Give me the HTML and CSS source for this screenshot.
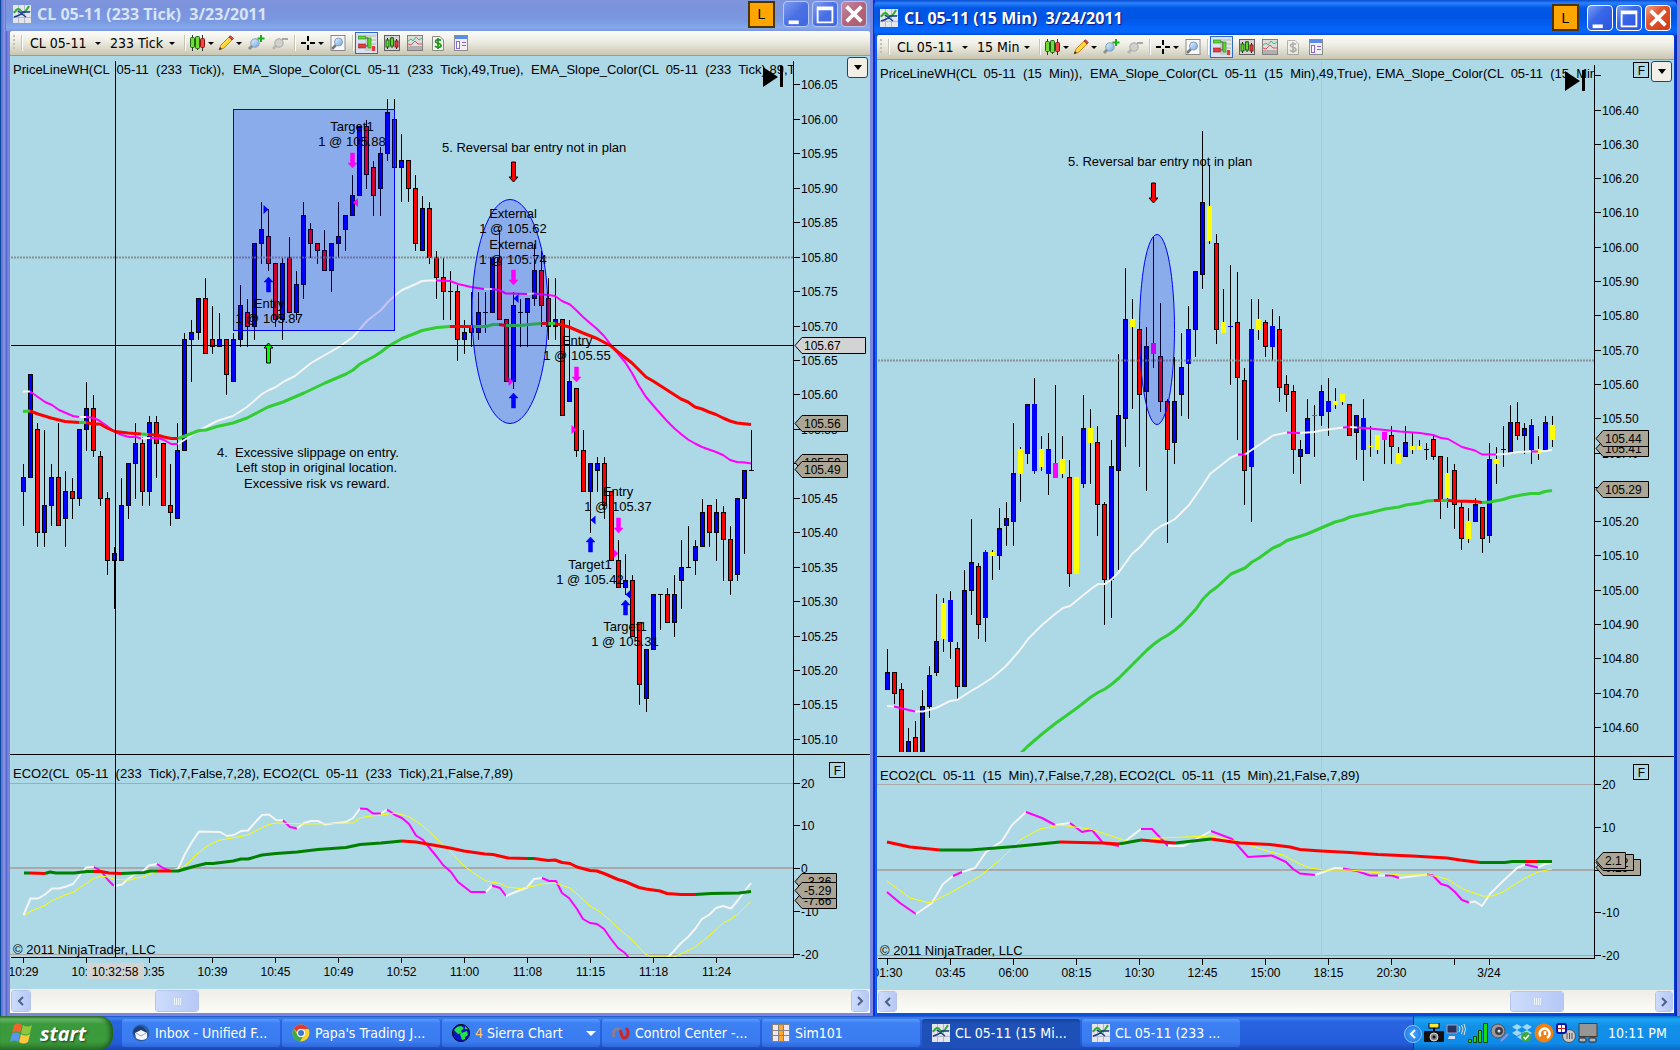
FILE: index.html
```
<!DOCTYPE html>
<html lang="en">
<head>
<meta charset="utf-8">
<title>CL 05-11 charts</title>
<link rel="stylesheet" href="styles.css">
</head>
<body>
<svg class="defs" width="0" height="0" aria-hidden="true">
  <defs>
    <linearGradient id="glass" x1="0" y1="0" x2="1" y2="1"><stop offset="0" stop-color="#e8f4ff"/><stop offset="1" stop-color="#6fa8dc"/></linearGradient>
    <symbol id="i-app" viewBox="0 0 18 18"><rect width="18" height="18" fill="#e4e6ee"/><path d="M5.500 0V18M11.500 0V18M0 6.500H18M0 12.500H18" stroke="#b4b8c8" stroke-width="1"/><path d="M1 8C4 3 6 3 8 6S12 8 16 1" fill="none" stroke="#2fae2f" stroke-width="2"/><path d="M1 12C5 11 8 10 10 7L17 7M5 6L13 12" fill="none" stroke="#1c3c8c" stroke-width="1.500"/></symbol>
    <symbol id="i-bars" viewBox="0 0 16 16"><path d="M2.500 0V16M7.500 1V15M12.500 0V16" stroke="#333"/><rect x=".5" y="2.500" width="4" height="10" rx="1" fill="#6edc32" stroke="#1e6414"/><rect x="5.500" y="1.500" width="4" height="12" rx="1" fill="#6edc32" stroke="#1e6414"/><rect x="10.500" y="3.500" width="4" height="9" rx="1" fill="#f04646" stroke="#8c1414"/></symbol>
    <symbol id="i-pencil" viewBox="0 0 16 16"><path d="M1 15L3 10L11 2L14 5L6 13Z" fill="#ffd93a" stroke="#c8862a"/><path d="M11 2L12.500 .8L15.200 3.500L14 5Z" fill="#e05050" stroke="#a03030"/><path d="M1 15L2 12L4 14Z" fill="#333"/></symbol>
    <symbol id="i-zoomin" viewBox="0 0 18 16"><path d="M2 14L6 10" stroke="#8f8f8f" stroke-width="3"/><circle cx="8" cy="8" r="4.200" fill="url(#glass)" stroke="#7d9cbc"/><path d="M14 0V7M10.500 3.500H17.500" stroke="#18b018" stroke-width="2"/></symbol>
    <symbol id="i-zoomout" viewBox="0 0 18 16"><path d="M2 14L6 10" stroke="#b8b8b0" stroke-width="3"/><circle cx="8" cy="8" r="4.200" fill="#d0d0cc" stroke="#a8a8a4"/><path d="M11 4H17" stroke="#a8a8a0" stroke-width="2"/></symbol>
    <symbol id="i-cross" viewBox="0 0 16 16"><path d="M8 1V6M8 10V15M1 8H6M10 8H15" stroke="#000" stroke-width="2"/></symbol>
    <symbol id="i-find" viewBox="0 0 16 16"><rect x="1" y=".5" width="14" height="15" fill="#f8f8f8" stroke="#8a8a8a"/><path d="M2 14L6 10" stroke="#777" stroke-width="2.500"/><circle cx="8.500" cy="7" r="4" fill="url(#glass)" stroke="#7d9cbc"/></symbol>
    <symbol id="i-trader" viewBox="0 0 18 16"><rect x="7" width="11" height="16" fill="#c8d0cc"/><path d="M9 3H18M9 7H18M9 11H18" stroke="#fff"/><rect x=".5" y="1" width="7" height="3" fill="#5adc28" stroke="#28821e" stroke-width=".6"/><rect x=".5" y="9" width="7" height="4" fill="#e63c3c" stroke="#8c1e1e" stroke-width=".6"/><path d="M8 3H10V11H8" fill="none" stroke="#444"/><rect x="10" y="3" width="3" height="10" fill="#5adc28" stroke="#28821e" stroke-width=".6"/><rect x="14" y="11" width="3" height="5" fill="#e63c3c"/></symbol>
    <symbol id="i-boxbars" viewBox="0 0 16 16"><rect x=".5" y=".5" width="15" height="15" fill="#d4d4d4" stroke="#606060"/><path d="M3.500 3V14M8 2V13M12.500 4V14" stroke="#222"/><rect x="2" y="5" width="3" height="7" fill="#5adc28" stroke="#1e6414"/><rect x="6.500" y="3" width="3" height="8" fill="#5adc28" stroke="#1e6414"/><rect x="11" y="6" width="3" height="6" fill="#e63c3c" stroke="#8c1e1e"/></symbol>
    <symbol id="i-lines" viewBox="0 0 16 16"><rect x=".5" y=".5" width="15" height="15" fill="#dcdcdc" stroke="#808080"/><path d="M1 11H15V15H1Z" fill="#b0b0b0"/><path d="M1 6L4 4L6 6L9 2L12 5L15 3" fill="none" stroke="#50b478"/><path d="M1 9L4 10L8 6L11 9L15 9" fill="none" stroke="#e05050"/></symbol>
    <symbol id="i-money" viewBox="0 0 16 16"><path d="M2.500 1.500H10L13.500 5V15.500H2.500Z" fill="#f4f4f0" stroke="#8c8c84"/><path d="M11 5.500C9 4 5.500 4.500 5.500 6.500S11 8 11 10.500S6 12.500 5 11M8 3V14" fill="none" stroke="currentColor" stroke-width="1.700"/></symbol>
    <symbol id="i-form" viewBox="0 0 16 16"><rect x="1.500" y=".5" width="13" height="15" fill="#f0f0f4" stroke="#8c8c90"/><rect x="2" y="1" width="12" height="3" fill="#5a8ce6"/><rect x="3.500" y="6.500" width="3" height="7" fill="#fff" stroke="#8c64dc"/><path d="M9 7.500H13M9 10.500H13" stroke="#8c64dc"/></symbol>
    <symbol id="i-left" viewBox="0 0 8 10"><path d="M6 1L2 5L6 9" fill="none" stroke="currentColor" stroke-width="2"/></symbol>
    <symbol id="i-right" viewBox="0 0 8 10"><path d="M2 1L6 5L2 9" fill="none" stroke="currentColor" stroke-width="2"/></symbol>
  </defs>
</svg>

<main class="desktop">
  <section class="window window--back" aria-label="CL 05-11 (233 Tick)">
    <header class="title title--back">
      <svg class="title__icon"><use href="#i-app"/></svg>
      <h1 class="title__text">CL 05-11 (233 Tick)&nbsp; 3/23/2011</h1>
      <button class="link-btn">L</button>
      <button class="win-btn" aria-label="Minimize"><svg viewBox="0 0 26 26"><path d="M5 20H16V24H5Z" fill="#fff"/></svg></button>
      <button class="win-btn" aria-label="Maximize"><svg viewBox="0 0 26 26"><path d="M4 5H22V23H4ZM6 9V21H20V9Z" fill="#fff" fill-rule="evenodd"/></svg></button>
      <button class="win-btn win-btn--close" aria-label="Close"><svg viewBox="0 0 26 26"><path d="M5 5L21 21M21 5L5 21" stroke="#fff" stroke-width="4"/></svg></button>
    </header>
    <div class="toolbar">
      <span class="grip"></span><span class="sep"></span>
      <label class="combo combo--symbol"><select aria-label="Instrument"><option>CL 05-11</option></select></label>
      <label class="combo combo--tick"><select aria-label="Interval"><option>233 Tick</option></select></label>
      <span class="sep"></span>
      <button class="tool tool--menu" aria-label="Bar style"><svg><use href="#i-bars"/></svg></button>
      <button class="tool tool--menu" aria-label="Draw"><svg><use href="#i-pencil"/></svg></button>
      <button class="tool tool--zoom" aria-label="Zoom in"><svg><use href="#i-zoomin"/></svg></button>
      <button class="tool tool--zoom" aria-label="Zoom out"><svg><use href="#i-zoomout"/></svg></button>
      <span class="sep"></span>
      <button class="tool tool--menu" aria-label="Cursor"><svg><use href="#i-cross"/></svg></button>
      <button class="tool tool--zoom" aria-label="Find"><svg><use href="#i-find"/></svg></button>
      <span class="sep"></span>
      <button class="tool tool--on" aria-label="Chart trader"><svg><use href="#i-trader"/></svg></button>
      <button class="tool" aria-label="Data series"><svg><use href="#i-boxbars"/></svg></button>
      <button class="tool" aria-label="Indicators"><svg><use href="#i-lines"/></svg></button>
      <button class="tool tool--money" aria-label="Strategies"><svg><use href="#i-money"/></svg></button>
      <button class="tool" aria-label="Properties"><svg><use href="#i-form"/></svg></button>
    </div>
    <div class="chart">
      <svg id="tick-chart" class="chart__svg" viewBox="10 56 860 933" preserveAspectRatio="xMinYMin meet"></svg>
      <button class="drop" aria-label="Chart menu"></button>
    </div>
    <div class="scroll scroll--tick">
      <button class="scroll__btn" aria-label="Scroll left"><svg><use href="#i-left"/></svg></button>
      <div class="scroll__thumb"><i></i><i></i><i></i><i></i></div>
      <button class="scroll__btn scroll__btn--end" aria-label="Scroll right"><svg><use href="#i-right"/></svg></button>
    </div>
  </section>

  <section class="window window--front" aria-label="CL 05-11 (15 Min)">
    <header class="title title--front">
      <svg class="title__icon"><use href="#i-app"/></svg>
      <h1 class="title__text">CL 05-11 (15 Min)&nbsp; 3/24/2011</h1>
      <button class="link-btn">L</button>
      <button class="win-btn" aria-label="Minimize"><svg viewBox="0 0 26 26"><path d="M5 20H16V24H5Z" fill="#fff"/></svg></button>
      <button class="win-btn" aria-label="Maximize"><svg viewBox="0 0 26 26"><path d="M4 5H22V23H4ZM6 9V21H20V9Z" fill="#fff" fill-rule="evenodd"/></svg></button>
      <button class="win-btn win-btn--close" aria-label="Close"><svg viewBox="0 0 26 26"><path d="M5 5L21 21M21 5L5 21" stroke="#fff" stroke-width="4"/></svg></button>
    </header>
    <div class="toolbar">
      <span class="grip"></span><span class="sep"></span>
      <label class="combo combo--symbol"><select aria-label="Instrument"><option>CL 05-11</option></select></label>
      <label class="combo combo--min"><select aria-label="Interval"><option>15 Min</option></select></label>
      <span class="sep"></span>
      <button class="tool tool--menu" aria-label="Bar style"><svg><use href="#i-bars"/></svg></button>
      <button class="tool tool--menu" aria-label="Draw"><svg><use href="#i-pencil"/></svg></button>
      <button class="tool tool--zoom" aria-label="Zoom in"><svg><use href="#i-zoomin"/></svg></button>
      <button class="tool tool--zoom" aria-label="Zoom out"><svg><use href="#i-zoomout"/></svg></button>
      <span class="sep"></span>
      <button class="tool tool--menu" aria-label="Cursor"><svg><use href="#i-cross"/></svg></button>
      <button class="tool tool--zoom" aria-label="Find"><svg><use href="#i-find"/></svg></button>
      <span class="sep"></span>
      <button class="tool tool--on" aria-label="Chart trader"><svg><use href="#i-trader"/></svg></button>
      <button class="tool" aria-label="Data series"><svg><use href="#i-boxbars"/></svg></button>
      <button class="tool" aria-label="Indicators"><svg><use href="#i-lines"/></svg></button>
      <button class="tool tool--off" aria-label="Strategies"><svg><use href="#i-money"/></svg></button>
      <button class="tool" aria-label="Properties"><svg><use href="#i-form"/></svg></button>
    </div>
    <div class="chart">
      <svg id="min-chart" class="chart__svg" viewBox="877 60 797 930" preserveAspectRatio="xMinYMin meet"></svg>
      <button class="drop" aria-label="Chart menu"></button>
    </div>
    <div class="scroll scroll--min">
      <button class="scroll__btn" aria-label="Scroll left"><svg><use href="#i-left"/></svg></button>
      <div class="scroll__thumb"><i></i><i></i><i></i><i></i></div>
      <button class="scroll__btn scroll__btn--end" aria-label="Scroll right"><svg><use href="#i-right"/></svg></button>
    </div>
  </section>
</main>

<footer class="taskbar">
  <button class="start">
    <svg viewBox="0 0 24 24"><path d="M4 4C7 2 9 2 12 4L10 12C8 10 5 10 2 12Z" fill="#f0642d"/><path d="M13 4C16 6 19 6 22 4L20 12C17 14 14 14 11 12Z" fill="#8cc83c"/><path d="M2 13C5 11 7 11 10 13L8 21C6 19 3 19 0 21Z" fill="#5a96f0"/><path d="M11 13C14 15 17 15 20 13L18 21C15 23 12 23 9 21Z" fill="#fac83c"/></svg>
    <span>start</span>
  </button>
  <nav class="tasks">
    <button class="task"><svg viewBox="0 0 18 18"><circle cx="9" cy="9" r="8.500" fill="#2a5fa8"/><path d="M1 9C1 3 7 1 11 3L15 8L13 15H6Z" fill="#1c3f78"/><path d="M3 9L9 6L15 9V14C12 17 6 16 4 14Z" fill="#f4f6fa"/><path d="M4 9L9 12L14 9" fill="none" stroke="#9aa8c0"/></svg><span>Inbox - Unified F...</span></button>
    <button class="task"><svg viewBox="0 0 18 18"><circle cx="9" cy="9" r="8.500" fill="#f6d232"/><path d="M9 .5A8.500 8.500 0 0 1 16.500 5H9A4 4 0 0 0 5 8L1.800 4.500A8.500 8.500 0 0 1 9 .5Z" fill="#e03c32"/><path d="M1.800 4.500A8.500 8.500 0 0 0 8 17.500L11 12.500A4 4 0 0 1 5.500 11Z" fill="#3caa46"/><circle cx="9" cy="9" r="4" fill="#fff"/><circle cx="9" cy="9" r="3" fill="#3c78d2"/></svg><span>Papa's Trading J...</span></button>
    <button class="task task--group"><svg viewBox="0 0 18 18"><circle cx="9" cy="9" r="8.500" fill="#0a14c8" stroke="#000"/><path d="M2 6L5 3L9 2L12 4L9 7L10 9L6 10ZM8 10L12 8L15 7L16 11L13 13L13 15L10 16L9 13ZM13 2L16 5L13 5Z" fill="#1ee63c"/></svg><span><b>4</b> Sierra Chart</span></button>
    <button class="task"><svg viewBox="0 0 18 18"><path d="M2 13C0 7 5 2 8 6C10 9 9 14 11 14" fill="none" stroke="#8c7c8c" stroke-width="3"/><path d="M8 6C10 9 9 14 12 14C17 13 17 7 14 4" fill="none" stroke="#c82828" stroke-width="3"/></svg><span>Control Center -...</span></button>
    <button class="task"><svg viewBox="0 0 18 18"><rect width="18" height="18" fill="#8c8278"/><path d="M1 1H6V6H1ZM12 1H17V6H12ZM1 7H6V11H1ZM12 7H17V11H12ZM1 12H6V17H1ZM12 12H17V17H12Z" fill="#ece8f4"/><path d="M7 1H11V6H7ZM7 7H11V11H7ZM7 12H11V17H7Z" fill="#ffa82d"/></svg><span>Sim101</span></button>
    <button class="task task--active"><svg><use href="#i-app"/></svg><span>CL 05-11 (15 Mi...</span></button>
    <button class="task"><svg><use href="#i-app"/></svg><span>CL 05-11 (233 ...</span></button>
  </nav>
  <div class="tray">
    <button class="tray__more" aria-label="Show hidden icons"><svg><use href="#i-left"/></svg></button>
    <svg viewBox="0 0 20 20"><rect x="5" width="10" height="5" fill="#ffe63c" stroke="#000"/><path d="M9 5H11V8H9Z" fill="#000"/><rect y="8" width="20" height="11" rx="1" fill="#111"/><circle cx="10" cy="14" r="4" fill="#888" stroke="#ddd"/><circle cx="10" cy="14" r="1.500" fill="#111"/></svg>
    <svg viewBox="0 0 20 20"><rect x="1" y="2" width="10" height="8" fill="#28325a" stroke="#9aa0c0"/><path d="M3 13H9V16H2Z" fill="#dcdcf0"/><path d="M13 3Q15 6 13 9M15.500 2Q18.500 6 15.500 11M18 1Q21 6 18 12" fill="none" stroke="#e8e0c8"/></svg>
    <svg viewBox="0 0 20 20"><path d="M.5 16.500H3.500V19.500H.5ZM5.500 13.500H8.500V19.500H5.500ZM10.500 7.500H13.500V19.500H10.500ZM15.500 .5H19.500V19.500H15.500Z" fill="#14dc14" stroke="#064806"/></svg>
    <svg viewBox="0 0 20 20"><circle cx="8" cy="8" r="7" fill="#9a9aa0" stroke="#50505a"/><circle cx="9" cy="8" r="4" fill="#3c3c46"/><circle cx="9" cy="8" r="1.500" fill="#ddd"/><path d="M11 18L18 11" stroke="#8c96dc" stroke-width="2"/></svg>
    <svg viewBox="0 0 20 20"><path d="M5 1L10 4L5 7L0 4ZM15 1L20 4L15 7L10 4ZM5 7L10 10L5 13L0 10ZM15 7L20 10L15 13L10 10ZM5 14L10 11L14 14L10 17Z" fill="#a0d8fa"/><circle cx="14" cy="14" r="5" fill="#3caa3c"/><path d="M11.500 14L13.500 16L17 12" fill="none" stroke="#fff" stroke-width="1.500"/></svg>
    <svg viewBox="0 0 20 20"><circle cx="10" cy="10" r="9.500" fill="#f08214"/><path d="M13 15A5 5 0 1 0 6.500 13.500M11 8V12" fill="none" stroke="#fff" stroke-width="2.500"/></svg>
    <svg viewBox="0 0 20 20"><circle cx="13" cy="13" r="6.500" fill="#c8c8c8" stroke="#505050"/><path d="M11 10V16M13.500 10V16M16 10V16" stroke="#505050"/><rect x="1" y="1" width="9" height="9" rx="2" fill="#fff" stroke="#0a14a0" stroke-width="2"/><path d="M5.500 2V9M2 5.500H9" stroke="#c81e1e"/></svg>
    <svg viewBox="0 0 20 20"><rect x="1" y=".5" width="18" height="13" fill="#969696" stroke="#3c3c3c"/><rect x="1" y="15" width="7" height="4" rx="1" fill="#b4b4b4" stroke="#222"/><rect x="11" y="15" width="7" height="4" rx="1" fill="#b4b4b4" stroke="#222"/></svg>
    <time class="clock">10:11 PM</time>
  </div>
</footer>
<script src="chart.js"></script>
</body>
</html>
```
FILE: styles.css
```
* { box-sizing: border-box; }
body {
  margin: 0;
  height: 100vh;
  display: flex;
  flex-direction: column;
  overflow: hidden;
  font-family: "DejaVu Sans Condensed", "DejaVu Sans", sans-serif;
  font-size: 14px;
  color: #000;
}
button, select { font: inherit; color: inherit; border: 0; padding: 0; margin: 0; background: none; }
.defs { position: absolute; }

.desktop { flex: 1; min-height: 0; display: grid; grid-template-columns: 873fr 807fr; grid-template-rows: 100%; }
.window { display: flex; flex-direction: column; min-width: 0; padding-bottom: 3px; }
.window--back {
  padding-left: 10px;
  padding-right: 3px;
  background: linear-gradient(90deg, #0a4a9c 1px, #5a6cd0 1px, #8390e4 4px, #8c9ae6 5px, #4c5cc4 6px, #7b88e0 8px, #6f80dc 10px, #7b86dd 10px);
}
.window--front {
  padding-left: 4px;
  padding-right: 6px;
  background: linear-gradient(90deg, #0831d9 2px, #166aee 2px, #0855dd 4px, #0842e0 calc(100% - 6px), #001ea0 calc(100% - 3px), #7b86dd calc(100% - 3px));
}

.title { display: flex; align-items: center; padding: 0 3px; gap: 3px; flex: none; }
.title--back { height: 31px; padding-bottom: 3px; margin-left: -4px; padding-left: 7px; color: #d8e4f8; background: linear-gradient(#7f94dc, #7a94de 40%, #7b9ae2 70%, #84aaec 90%, #7c94de); }
.title--front { height: 35px; margin: 0 -3px; padding: 0 6px; color: #fff; border-radius: 6px 6px 0 0; background: linear-gradient(#0a4ad0, #2a82fa 3px, #0058e6 8px, #0054e3 50%, #0464fa 80%, #0466fc 92%, #0048d8); }
.title__icon { width: 18px; height: 18px; }
.title__text { flex: 1; margin: 0 0 0 3px; font: 700 16px "Open Sans", "Noto Sans", sans-serif; white-space: nowrap; }
.title--front .title__text { text-shadow: 1px 1px 1px #0a1883; }
.link-btn { width: 27px; height: 27px; margin-right: 5px; background: #ffa500; border: 2px solid #4a3400; font: 14px "Liberation Sans", Arial, sans-serif; color: #000; }
.win-btn { width: 26px; height: 26px; border: 1px solid #fff; border-radius: 4px; background: linear-gradient(135deg, #7ea0f4, #3a68e8 40%, #2a54e0); }
.win-btn svg { display: block; width: 24px; height: 24px; }
.win-btn--close { background: linear-gradient(135deg, #f0a080, #e2532c 40%, #c83c14); }
.title--back .win-btn { border-color: #b8c8f4; background: linear-gradient(135deg, #7e9cf0, #4a70e4 50%, #4068e0); }
.title--back .win-btn--close { background: linear-gradient(135deg, #c48ca8, #b46478 50%, #ac5c70); }

.toolbar { display: flex; align-items: center; gap: 4px; height: 25px; flex: none; padding: 0 3px; background: linear-gradient(#fdfdfa, #ecebe2 45%, #c9c6b0); border-bottom: 1px solid #9ca078; border-radius: 2px 2px 0 0; }
.grip { width: 4px; height: 16px; background: repeating-linear-gradient(#c4c0b0 0 2px, transparent 2px 4px); background-size: 2px 100%; background-repeat: no-repeat; }
.sep { width: 2px; height: 16px; border-left: 1px solid #c8c4b4; border-right: 1px solid #fff; }
.combo { position: relative; display: flex; align-items: center; height: 22px; }
.combo--symbol { width: 79px; }
.combo--tick { width: 70px; }
.combo--min { width: 58px; }
.combo select { appearance: none; width: 100%; padding-left: 3px; }
.combo--tick select, .combo--min select { padding-left: 0; }
.combo::after, .tool--menu::after { content: ""; border: 3px solid transparent; border-top-color: #000; border-bottom: 0; }
.combo::after { position: absolute; right: 5px; top: 10px; }
.tool { display: flex; align-items: center; justify-content: center; width: 19px; height: 22px; flex: none; }
.tool svg { width: 16px; height: 16px; flex: none; }
.tool--menu { width: 24px; gap: 2px; }
.tool--zoom { width: 20px; }
.tool--zoom svg { width: 18px; }
.tool--on { width: 23px; margin-left: -3px; background: #d8e2f2; border: 1px solid #316ac5; }
.tool--on svg { width: 18px; }
.tool--money { color: #1e961e; }
.tool--off { color: #8c8c8c; opacity: .6; }

.chart { position: relative; flex: 1; min-height: 0; background: #add8e6; }
.chart__svg { display: block; width: 100%; height: 100%; font: 13px "Liberation Sans", Arial, sans-serif; }
.chart__svg text { white-space: pre; }
.chart__svg .num { font-size: 12px; }
.mid { text-anchor: middle; }
.drop { position: absolute; top: 1px; right: 2px; width: 21px; height: 21px; background: #f2f0e6; border: 1px solid #1c4080; border-radius: 3px; }
.drop::after { content: ""; display: block; width: 0; margin: 0 auto; border: 4px solid transparent; border-top: 5px solid #000; border-bottom: 0; }

.scroll { display: grid; flex: none; background: linear-gradient(#eeede6, #fdfdf8); padding: 1px; }
.scroll--tick { height: 24px; grid-template-columns: 20px 124fr 44px 652fr 18px; }
.scroll--min { height: 23px; grid-template-columns: 19px 613fr 54px 91fr 18px; }
.scroll__btn, .scroll__thumb { display: flex; align-items: center; justify-content: center; background: linear-gradient(90deg, #cddcfc, #b6c8f6); border: 1px solid #fff; outline: 1px solid #b4c4ec; outline-offset: -1px; border-radius: 3px; color: #4d6185; }
.scroll__thumb { grid-column: 3; gap: 1px; }
.scroll__thumb i { width: 1px; height: 7px; background: #eef4fe; }
.scroll__btn--end { grid-column: 5; }
.scroll__btn svg { width: 8px; height: 10px; }

.taskbar { display: flex; flex: none; height: 34px; background: linear-gradient(#1f4fc0, #3f86f0 2px, #2b66e2 5px, #245cdc 80%, #1b46b0); color: #fff; }
.start { display: flex; align-items: center; gap: 6px; width: 113px; padding-left: 10px; border-radius: 0 14px 14px 0; background: linear-gradient(#2e7a2e, #68b868 3px, #3a9a3c 8px, #3c9c3c 75%, #2c742c); box-shadow: inset -3px 0 4px #1e5c1e; font: italic 700 20px "Open Sans", "Noto Sans", sans-serif; text-shadow: 1px 1px 2px #143c14; }
.start svg { width: 24px; height: 24px; }
.tasks { display: flex; flex: 1; gap: 2px; padding: 3px 0 3px 9px; min-width: 0; }
.task { display: flex; align-items: center; gap: 5px; width: 158px; padding-left: 10px; border-radius: 3px; background: linear-gradient(#5c9cfc, #3c80f4 4px, #3a7cf0 80%, #2f68dc); white-space: nowrap; }
.task svg { width: 18px; height: 18px; flex: none; }
.task b { font-weight: 400; color: #ffc864; }
.task--group::after { content: ""; border: 5px solid transparent; border-top-color: #fff; border-bottom: 0; margin-left: 18px; }
.task--active { background: linear-gradient(#16409c, #1e52b7 5px, #1e50b8); }
.tray { position: relative; display: flex; align-items: center; gap: 2px; width: 267px; padding-left: 10px; background: linear-gradient(#0c70c8, #1ca4f4 3px, #1290e8 10px, #0f8cea 80%, #0c68c0); border-left: 1px solid #083c90; }
.tray > svg { width: 20px; height: 20px; flex: none; }
.tray__more { position: absolute; left: -10px; top: 9px; width: 18px; height: 18px; border-radius: 9px; background: radial-gradient(#48a8fc, #1470e0); border: 1px solid #8cc4fc; display: flex; align-items: center; justify-content: center; }
.tray__more svg { width: 8px; height: 10px; }
.clock { margin-left: 8px; white-space: nowrap; }
```
FILE: chart.js
```
const NS = 'http://www.w3.org/2000/svg';
const COLORS = { w: '#f5f5f5', m: '#ff00ff', g: '#32cd32', r: '#ff0000', d: '#008000', y: '#ffff00' };

function add(svg, name, attrs, text) {
  const el = document.createElementNS(NS, name);
  for (const key in attrs) el.setAttribute(key, attrs[key]);
  if (text !== undefined) el.textContent = text;
  svg.appendChild(el);
  return el;
}

// Each bar: high, body top, body bottom, low (ticks below the origin price), kind.
function candles(svg, bars, x0, y0, step) {
  const g = add(svg, 'g', { 'shape-rendering': 'crispEdges' });
  bars.trim().split(/\s*\n\s*|\s*;\s*/).forEach((row, i) => {
    const [h, t, b, l, k] = row.split(' ');
    const x = x0 + 7 * i;
    const y = v => Math.floor(y0 + step * v) + 0.5;
    add(g, 'path', { d: `M${x} ${y(h)}V${y(l) + 0.5}`, stroke: '#000' });
    const fill = { B: '#0000ff', R: '#ff0000', b: '#0000ff', Y: '#ffff00', M: '#ff00ff', D: '#000' }[k];
    if (t === b) add(g, 'path', { d: `M${x - 2.5} ${y(t)}H${x + 2.5}`, stroke: fill });
    else if (k === 'B' || k === 'R') add(g, 'rect', { x: x - 2, y: y(t), width: 4, height: y(b) - y(t), fill, stroke: '#000' });
    else add(g, 'rect', { x: x - 2.5, y: y(t) - 0.5, width: 5, height: y(b) - y(t) + 1, fill });
  });
}

// Points with colour letters in between; "-" lifts the pen.
function curve(svg, spec, width) {
  let color = '', pts = [];
  const flush = () => { if (pts.length > 1) add(svg, 'polyline', { points: pts.join(' '), fill: 'none', stroke: COLORS[color], 'stroke-width': width, 'stroke-linejoin': 'round' }); };
  spec.trim().split(/\s+/).forEach(tok => {
    if (tok === '-') { flush(); pts = []; }
    else if (COLORS[tok]) { flush(); color = tok; pts = pts.slice(-1); }
    else pts.push(tok);
  });
  flush();
}

function line(svg, x1, y1, x2, y2, stroke = '#000', width = 1) {
  add(svg, 'line', { x1, y1, x2, y2, stroke, 'stroke-width': width });
}
function label(svg, x, y, text, cls = '') { add(svg, 'text', { x, y, class: cls }, text); }

function arrow(svg, x, y, dir, fill, long) {
  const n = long ? 20 : 15, w = 2;
  const p = dir === 'down'
    ? `M${x - w} ${y}H${x + w}V${y + n - 5}H${x + 4.5}L${x} ${y + n}L${x - 4.5} ${y + n - 5}H${x - w}Z`
    : `M${x - w} ${y + n}H${x + w}V${y + 5}H${x + 4.5}L${x} ${y}L${x - 4.5} ${y + 5}H${x - w}Z`;
  add(svg, 'path', { d: p, fill, stroke: long ? '#000' : fill, 'stroke-width': long ? 1 : 0.5 });
}
function flag(svg, x, y, dir, fill) {
  const s = dir === 'right' ? 1 : -1;
  add(svg, 'path', { d: `M${x - 2.5 * s} ${y - 4.5}L${x + 2.5 * s} ${y}L${x - 2.5 * s} ${y + 4.5}Z`, fill });
}
function tag(svg, x, y, right, text, fill = '#aba595') {
  add(svg, 'path', { d: `M${x} ${y + 8}L${x + 7} ${y}H${right}V${y + 16}H${x + 7}Z`, fill, stroke: '#000' });
  label(svg, x + 9, y + 12, text, 'num');
}
function note(svg, x, y, a, b) { label(svg, x, y, a, 'mid'); label(svg, x, y + 15, b, 'mid'); }
function boxF(svg, x, y) {
  add(svg, 'rect', { x, y, width: 15, height: 15, fill: 'none', stroke: '#000' });
  label(svg, x + 8, y + 12, 'F', 'mid num');
}
function play(svg, x, y) {
  add(svg, 'path', { d: `M${x} ${y}L${x + 15} ${y + 10}L${x} ${y + 20}ZM${x + 17} ${y - 1}H${x + 20}V${y + 20}H${x + 17}Z` });
}
function dotted(svg, x1, x2, y) {
  add(svg, 'line', { x1, x2, y1: y, y2: y, stroke: '#808080', 'stroke-width': 2, 'stroke-dasharray': '2 1', opacity: 0.8 });
}

function drawTick() {
  const s = document.getElementById('tick-chart');
  line(s, 10, 783.5, 793, 783.5, '#a9a9a9');
  line(s, 10, 868, 793, 868, '#a9a9a9', 2);
  line(s, 10, 954.5, 793, 954.5, '#a9a9a9');
  candles(s, `50 52 54 59 B;37 37 52 52 B;44 45 60 62 R;45 56 60 62 B;50 52 56 59 B;44 52 59 59 R;51 54 58 62 B
52 54 55 58 R;45 45 55 56 B;38 42 45 48 B;40 42 48 49 R;48 49 55 56 R;54 55 64 66 R;62 63 64 71 B;52 56 64 64 B
50 50 56 58 B;44 47 50 55 B;46 47 54 56 R;43 44 54 56 B;43 44 47 52 R;47 47 56 56 R;50 56 57 59 R;44 48 58 58 B
31 32 48 48 B;29 31 32 38 B;26 26 31 32 B;23 26 34 34 R;27 32 33 34 R;28 32 33 33 B;32 32 37 40 R;31 32 38 38 B
24 27 32 33 B;26 28 30 33 R;18 18 30 32 B;12 16 18 21 B;13 17 21 22 R;21 21 29 30 R;20 21 29 32 B;17 20 28 28 R
22 24 28 29 B;12 14 24 26 B;15 16 18 20 R;18 18 19 21 R;16 19 22 22 R;18 18 22 25 B;12 17 18 20 B;14 14 16 19 B
8 11 14 14 B;1 1 11 11 B;0 1 8 10 R;6 7 11 14 R;4 5 10 14 B;-3 -1 5 6 B;-3 0 7 7 R;2 6 7 12 B;6 6 10 12 R
8 10 18 19 R;11 13 19 19 B;12 13 20 21 R;19 20 23 26 R;20 23 25 29 R;22 25 25 29 D;24 25 32 35 R;29 31 32 34 B
25 30 31 33 R;25 28 31 32 B;25 28 28 31 D;20 20 28 28 B;16 20 29 29 R;29 29 38 38 R;25 27 38 39 B;26 28 28 33 D
26 26 28 33 B;18 22 26 27 B;19 22 27 30 R;23 26 30 32 R;23 29 30 32 B;29 29 43 43 R;29 38 41 41 B;39 39 48 49 R
45 48 54 54 R;50 50 54 60 B;49 50 51 54 B;49 50 56 58 R;54 54 64 64 R;61 64 68 68 R;63 67 68 69 B;66 67 75 75 R
73 73 82 85 R;77 77 84 86 B;69 69 77 77 B;69 69 69 74 D;68 69 73 73 R;66 69 73 75 B;61 65 67 71 B;59 65 65 65 D
61 62 64 66 B;55 57 62 62 B;56 56 60 62 R;55 57 60 64 B;56 57 61 67 R;59 61 67 69 R;55 55 66 67 B;51 51 55 63 B
45 51 51 51 D`, 23.5, 119.3, 6.89);
  dotted(s, 11, 793, 257.5);
  curve(s, `w 23,391.5 30,391.5 m 38,397 45,402 52,405 59,410 66,413 73,416 79,417 w 86,417 m 94,418 100,421 107,426 115,432 122,435 129,437 136,437 141,438.5 w 150,438 m 158,438 164,440 171,444 178,444
w 192,435 200,430 217,421 233,416 247,407 262,394 269,390 276,387 283,382 295,376 311,363 325,355 339,347 353,337 367,321 381,310 388,302 395,295.5 402,290 409,287 416,284 422,281 429,280.5 436,280.5
m 450,281 458,284 471,287 484,289 w 492,289 m 499,290 506,293.5 513,293.5 527,294 w 534,293.5 m 548,295 555,296 562,301 570,304.5 576,310 583,317 590,323 597,329 604,336 611,345 625,362 632,373 639,386 646,397 658,411 667,421 674,428 681,434 688,439.5 695,443.5 702,447 716,452 723,455 730,460 737,462 745,462.5 751,463.5`, 2);
  curve(s, `g 23,411.5 30,411 r 38,414 51,418 65,421.5 79,422.5 g 86,422.5 r 93,424 100,424 107,428 115,431.5 128,433 141,434 g 148,434.5 r 157,435 164,437 171,438.5 178,438.5
g 185,436 199,430.5 206,430 217,426.5 233,423 247,418 268,407 283,402 304,393 325,383 346,374 353,370 360,364 374,356.5 381,352 388,346.5 402,338.5 416,333 422,330.5 437,327.5 450,326.5
r 471,326.5 g 486,326.5 493,324.5 499,324.5 r 506,325.5 g 520,325.5 534,324 541,323.5 r 548,323.5 g 555,323.5 r 562,325 569,327 583,333 597,338.5 611,346 618,352 632,363 646,377 653,381 667,390 681,399 688,402 695,407 702,409 709,412 716,414.5 723,418 730,421 737,423 751,424.5`, 3);

  add(s, 'clipPath', { id: 'tick-clip' }).innerHTML = '<rect x="10" y="755" width="783" height="202"/>';
  const low = add(s, 'g', { 'clip-path': 'url(#tick-clip)' });
  curve(low, `w 23.5,915 30.5,898.5 38,898.5 45,894.5 52,888.5 59,888.5 66,886.5 73,884 80,875 86,867.5 94,867 m 101,871 108,880 114,886 w 122,884.5 128,879 135,874 142,872 149,865.5 157,864 m 163,868 170,871
w 178,869 185,854 192,842 199,831.5 220,832 227,836 234,835 241,831 248,830.5 255,822.5 262,815 269,814.5 276,820 283,820.5 m 290,827 297,828.5 w 304,823 311,821 318,821 325,824.5 332,823.5 346,822 353,818 360,808.5 m 367,809 373,813.5 381,813.5 w 387,809.5
m 395,815 402,818 409,824 416,835.5 423,840 430,848.5 437,857 443,865 451,872 458,882 471,892 486,892 w 492,885.5 m 500,888 506,896 w 513,893 527,887.5 534,879 542,878 m 549,881 556,881 562,893 569,898 577,909 583,919 590,923 597,924 604,929 611,939 618,948 625,953 629,958 - w 667,958 674,951 681,943 688,937 695,929 702,919 709,915 716,908 723,906 731,908.5 738,900 744,892 751,883`, 2);
  curve(low, `y 23.5,916 31,911 45,905.5 51,901 65,895 74,892 80,887.5 87,883 93,878.5 101,876 108,877 115,879.5 130,880 136,878 143,877 150,874 157,871.5 178,870 187,864 197,854 206,847 213,843 220,840 227,839 240,836.5 248,835 255,831 269,824.5 276,823 290,823.5 311,824 353,823 360,818 367,816.5 381,815 395,813 409,816.5 423,826 437,839 451,852 464,866 478,876 486,881 500,883.5 507,887 520,888.5 534,886 541,884 555,883 570,888 577,894 590,906 598,910.5 605,916 618,928 632,940 645,954 653,957 674,957 681,954 695,947 709,936 723,923 731,919 738,914 744,908 751,901.5`, 1);
  curve(low, `d 24,873 30,873 r 45,873.5 d 50,872 56,873 74,873 87,871.5 93,871.5 r 101,871.5 109,873 121,873.5 d 144,872.5 150,871 157,871 r 171,871 d 178,871 192,867 206,863.5 213,863.5 233,861 241,859 248,859 262,855 276,853.5 297,852 318,849.5 346,847.5 360,844.5 381,843 402,841
r 416,842 430,844.5 450,848 464,851 485,854 493,854.5 508,858 527,858.5 d 534,858.5 r 548,860.5 555,860 562,862.5 570,863.5 577,867 590,870.5 597,871 604,873.5 618,879.5 625,881.5 639,887.5 646,889 660,891 667,893.5 681,894.5 695,894.5 d 711,893.5 739,893 751,891.5`, 3);

  add(s, 'rect', { x: 233.5, y: 109.5, width: 161, height: 221, fill: 'rgba(0,0,255,.2)', stroke: '#0000ff' });
  add(s, 'ellipse', { cx: 510, cy: 311.5, rx: 38, ry: 112, fill: 'rgba(0,0,255,.2)', stroke: '#0000ff' });

  const M = '#ff00ff', B = '#0000ff';
  arrow(s, 352.5, 153, 'down', M); arrow(s, 268.5, 277, 'up', B); arrow(s, 268.5, 343, 'up', '#00ff00', true);
  arrow(s, 513.5, 162, 'down', '#ff0000', true); arrow(s, 513.5, 270, 'down', M); arrow(s, 513.5, 393, 'up', B);
  arrow(s, 576.5, 367, 'down', M); arrow(s, 590.5, 537, 'up', B); arrow(s, 618.5, 518, 'down', M); arrow(s, 625.5, 600, 'up', B);
  flag(s, 266, 209.5, 'right', B); flag(s, 355.5, 202.5, 'left', M); flag(s, 516, 298.5, 'left', B); flag(s, 511, 381.5, 'right', M);
  flag(s, 574, 429.5, 'right', M); flag(s, 593, 520, 'left', B); flag(s, 616, 553.5, 'right', M); flag(s, 628, 594.5, 'left', B);

  note(s, 352, 131, 'Target1', '1 @ 105.88'); note(s, 269, 308, 'Entry', '1 @ 105.87');
  note(s, 513, 218, 'External', '1 @ 105.62'); note(s, 513, 249, 'External', '1 @ 105.74');
  note(s, 577, 345, 'Entry', '1 @ 105.55'); note(s, 618, 496, 'Entry', '1 @ 105.37');
  note(s, 590, 569, 'Target1', '1 @ 105.42'); note(s, 625, 631, 'Target1', '1 @ 105.31');
  label(s, 442, 152, '5. Reversal bar entry not in plan');
  label(s, 217, 457, '4.  Excessive slippage on entry.');
  label(s, 236, 472, 'Left stop in original location.');
  label(s, 244, 488, 'Excessive risk vs reward.');

  const name = 'CL  05-11  (233  Tick)';
  const clip = add(s, 'svg', { x: 10, y: 56, width: 783, height: 30, viewBox: '10 56 783 30' });
  label(clip, 13, 74, `PriceLineWH(${name}),`);
  label(clip, 233, 74, `EMA_Slope_Color(${name},49,True),`);
  label(clip, 531, 74, `EMA_Slope_Color(${name},89,True)`);
  label(s, 13, 778, `ECO2(${name},7,False,7,28),`);
  label(s, 263, 778, `ECO2(${name},21,False,7,89)`);
  label(s, 13, 954, '© 2011 NinjaTrader, LLC');

  line(s, 793.5, 61, 793.5, 958); line(s, 11, 957.5, 794, 957.5); line(s, 10, 754.5, 870, 754.5);
  for (let i = 0; i < 20; i++) {
    const y = Math.floor(119.3 + 34.45 * (i - 1)) + 0.5;
    line(s, 794, y, 800, y);
    label(s, 801, y + 4, (106.05 - i * 0.05).toFixed(2), 'num');
  }
  [[783.5, '20'], [825.5, '10'], [868.5, '0'], [911.5, '-10'], [954.5, '-20']].forEach(([y, t]) => { line(s, 794, y, 800, y); label(s, 801, y + 4, t, 'num'); });
  ['10:29', '10:32', '10:35', '10:39', '10:45', '10:49', '10:52', '11:00', '11:08', '11:15', '11:18', '11:24'].forEach((t, i) => {
    const x = 23.5 + 63 * i;
    line(s, x, 958, x, 963);
    label(s, x, 976, t, 'mid num');
  });
  line(s, 11, 345.5, 793, 345.5); line(s, 115.5, 61, 115.5, 957);
  add(s, 'rect', { x: 87, y: 963, width: 57, height: 16, fill: '#d3d3d3' });
  label(s, 115, 976, '10:32:58', 'mid num');
  tag(s, 795, 337.5, 865.5, '105.67', '#d3d3d3');
  tag(s, 795, 415.5, 847.5, '105.56'); tag(s, 795, 454.5, 847.5, '105.50'); tag(s, 795, 461.5, 847.5, '105.49');
  tag(s, 795, 873.5, 836.5, '-3.36'); tag(s, 795, 892.5, 836.5, '-7.66'); tag(s, 795, 882.5, 836.5, '-5.29');
  boxF(s, 829.5, 762.5);
  play(s, 763, 67);
}

function drawMin() {
  const s = document.getElementById('min-chart');
  line(s, 877, 784.5, 1594, 784.5, '#a9a9a9'); line(s, 877, 870, 1594, 870, '#a9a9a9', 2); line(s, 877, 955.5, 1594, 955.5, '#a9a9a9');
  line(s, 1321.5, 61, 1321.5, 958, '#b5c6ca');
  add(s, 'clipPath', { id: 'min-clip' }).innerHTML = '<rect x="877" y="60" width="717" height="692"/>';
  const top = add(s, 'g', { 'clip-path': 'url(#min-clip)' });
  candles(top, `157 164 169 169 B;164 164 170 173 R;167 169 195 195 R;180 184 195 195 B;178 183 195 195 R;169 174 195 195 B;162 165 174 177 B;141 155 164 165 B
142 144 154 158 Y;140 143 155 160 b;155 157 168 172 R;134 140 168 168 B;119 132 140 147 B;132 133 150 154 R;128 129 148 155 b;128 129 130 137 Y
116 122 130 134 B;114 119 121 127 B;91 106 120 127 B;98 99 106 114 Y;86 86 100 103 B;78 86 105 106 b;95 99 104 105 Y;94 99 106 112 b
80 103 107 107 M;95 102 106 107 Y;102 107 135 139 R;107 107 135 135 Y;83 93 109 110 B;87 93 97 109 Y;92 97 115 124 R;114 115 137 150 R
96 104 137 148 B;71 89 105 134 B;46 61 90 98 B;55 61 63 87 Y;64 64 83 104 R;63 69 82 111 B;37 68 71 75 M;56 72 85 88 R
84 85 99 126 R;72 85 97 103 B;65 75 83 89 B;57 64 74 90 b;47 47 64 72 B;6 27 48 52 B;16 28 38 39 Y;36 39 64 68 R
52 62 65 65 Y;45 63 63 80 b;47 62 78 96 R;75 79 105 115 R;55 64 104 120 b;55 61 64 67 Y;61 62 69 72 R;58 63 69 73 b
60 64 81 85 R;77 80 83 88 R;80 82 99 106 R;96 99 101 109 B;84 90 100 100 B;86 89 89 101 M;80 82 89 92 B;78 85 88 95 b
81 85 86 87 Y;83 83 85 86 Y;86 86 95 95 R;89 89 94 102 B;84 90 99 108 b;92 98 98 101 Y;95 95 99 100 Y;94 94 96 103 M
92 95 98 103 R;98 100 103 103 Y;92 97 101 101 B;94 98 99 100 Y;96 98 99 99 Y;97 99 99 102 D;95 96 101 102 R;101 101 114 119 R
101 106 113 116 Y;103 105 115 122 R;114 116 125 128 R;116 120 125 126 Y;113 115 120 120 B;116 116 125 129 R;97 102 124 126 B;98 102 103 109 Y
92 99 99 104 D;86 91 100 100 B;85 91 95 96 R;91 93 95 100 B;90 92 99 103 b;95 99 100 102 Y;89 91 99 99 B;89 92 96 98 Y`, 887.5, 110, 3.43);
  dotted(s, 878, 1594, 360.5);
  curve(top, `w 887,706 894,706.5 m 915,711.5 w 923,711.5 936,708 950,701 957,700 971,691 978,687 992,678 1006,666 1020,650 1028,639 1042,625 1055,614 1063,608 1070,606 1091,589 1098,584 1105,584 1112,579 1119,572 1132,554 1140,547 1154,531 1161,526 1168,523 1175,519 1182,512 1189,505 1203,485 1210,474 1224,463 1231,457.5 1238,454.5
m 1245,454.5 w 1259,445 1273,435.5 1287,432.5 m 1300,433 w 1314,432 1321,430.5 1343,427.5 m 1350,427 w 1357,427.5 m 1370,428.5 1385,430 1400,431.5 1420,433 1433,435 1441,438 1448,439 1455,443 1462,447 1475,450.5 1482,454.5 1496,454.5 w 1505,454 1518,452 1531,451.5 m 1538,451.5 w 1545,451 1552,450`, 2);
  curve(top, `g 1021,753 1028,746 1042,734 1056,723 1077,708 1091,697 1098,692.5 1105,689 1112,684 1119,678 1133,664 1147,650 1154,644 1161,639 1168,635 1175,630 1182,624 1196,609 1203,599 1210,592 1217,587 1231,574 1238,571 1245,568 1252,562 1259,558 1273,548 1280,545 1287,540.5 1307,534 1321,528 1335,522 1343,520 1350,517 1371,512.5 1385,509 1399,507 1406,505 1420,503 1427,501 1434,500.5
r 1441,500.5 g 1448,500.5 r 1455,501 1475,501.5 1482,502.5 g 1490,502 1503,499.5 1511,497 1524,494.5 1531,493.5 1539,493.5 1545,491.5 1552,490.5`, 3);
  curve(s, `m 887,892 900,903 916,914 w 932,903 943,884 953,876 m 962,872 w 975,868 986,852 1002,841 1012,825 1026,812 m 1042,818 1055,825 w 1070,823 m 1082,832 1092,830 1103,843 1119,846 w 1141,829 m 1152,829 1168,846 w 1184,846 1211,831 m 1232,839 1248,857 1272,855.5 m 1286,862 1293,869 1300,873.5 1315,875 w 1329,870 1335,868 1343,868.5
m 1357,871 1370,875.5 1378,875.5 w 1385,875.5 m 1392,875.5 1399,878 w 1415,876 1427,874.5 m 1433,875.5 1441,884 1448,886 1455,892 1462,900 1469,902.5 w 1475,901.5 1482,906 1490,894 1503,881 1517,868 1525,864.5 m 1538,867.5 w 1545,864 1552,863`, 2);
  curve(s, `y 887,881 910,898 930,903 950,893 980,876 1000,860 1020,840 1040,829 1060,825 1090,829 1130,842 1160,838 1211,836 1240,842 1270,852 1283,855 1300,864 1310,868 1325,870 1350,870 1370,872 1400,875 1430,875 1447,879 1463,889 1482,896 1492,896 1503,892 1525,878 1538,872 1552,869`, 1);
  curve(s, `r 887,842 910,847 940,850 d 970,850 1020,846 1060,842 r 1103,843 1119,844 d 1141,840 r 1175,843 d 1211,839 r 1240,843 1270,844.5 1290,847 1300,849.5 1321,851 1350,852.5 1378,854.5 1412,856 1447,858 1460,860 1480,862.5 d 1505,862.5 1512,861.5 1525,861.5 r 1538,861.5 d 1552,861.5`, 3);

  add(s, 'ellipse', { cx: 1157, cy: 329.5, rx: 17.5, ry: 95, fill: 'rgba(0,0,255,.2)', stroke: '#0000ff' });
  arrow(s, 1153.5, 183, 'down', '#ff0000', true);
  label(s, 1068, 166, '5. Reversal bar entry not in plan');

  const name = 'CL  05-11  (15  Min)';
  const clip = add(s, 'svg', { x: 877, y: 60, width: 717, height: 30, viewBox: '877 60 717 30' });
  label(clip, 880, 78, `PriceLineWH(${name}),`);
  label(clip, 1090, 78, `EMA_Slope_Color(${name},49,True),`);
  label(clip, 1376, 78, `EMA_Slope_Color(${name},89,True)`);
  label(s, 880, 780, `ECO2(${name},7,False,7,28),`);
  label(s, 1119, 780, `ECO2(${name},21,False,7,89)`);
  label(s, 880, 955, '© 2011 NinjaTrader, LLC');

  line(s, 1594.5, 65, 1594.5, 959); line(s, 878, 958.5, 1595, 958.5); line(s, 877, 756.5, 1674, 756.5);
  line(s, 1595, 75.5, 1601, 75.5);
  for (let i = 0; i < 19; i++) {
    const y = Math.floor(110 + 34.3 * i) + 0.5;
    line(s, 1595, y, 1601, y);
    label(s, 1602, y + 4, (106.4 - i * 0.1).toFixed(2), 'num');
  }
  [[784.5, '20'], [827.5, '10'], [870.5, ''], [912.5, '-10'], [955.5, '-20']].forEach(([y, t]) => { line(s, 1595, y, 1601, y); label(s, 1602, y + 4, t, 'num'); });
  ['01:30', '03:45', '06:00', '08:15', '10:30', '12:45', '15:00', '18:15', '20:30', ''].forEach((t, i) => {
    const x = 887.5 + 63 * i;
    line(s, x, 959, x, 965);
    label(s, x, 977, t, 'mid num');
  });
  line(s, 1489.5, 959, 1489.5, 965); label(s, 1489, 977, '3/24', 'mid num');
  tag(s, 1596, 440.5, 1648.5, '105.41'); tag(s, 1596, 430.5, 1648.5, '105.44'); tag(s, 1596, 481.5, 1648.5, '105.29');
  tag(s, 1596, 859.5, 1640.5, '0.29'); tag(s, 1596, 854.5, 1633.5, '2.12'); tag(s, 1596, 852.5, 1625.5, '2.1');
  boxF(s, 1633.5, 62.5); boxF(s, 1633.5, 764.5);
  play(s, 1565, 71);
}

drawTick();
drawMin();
```
